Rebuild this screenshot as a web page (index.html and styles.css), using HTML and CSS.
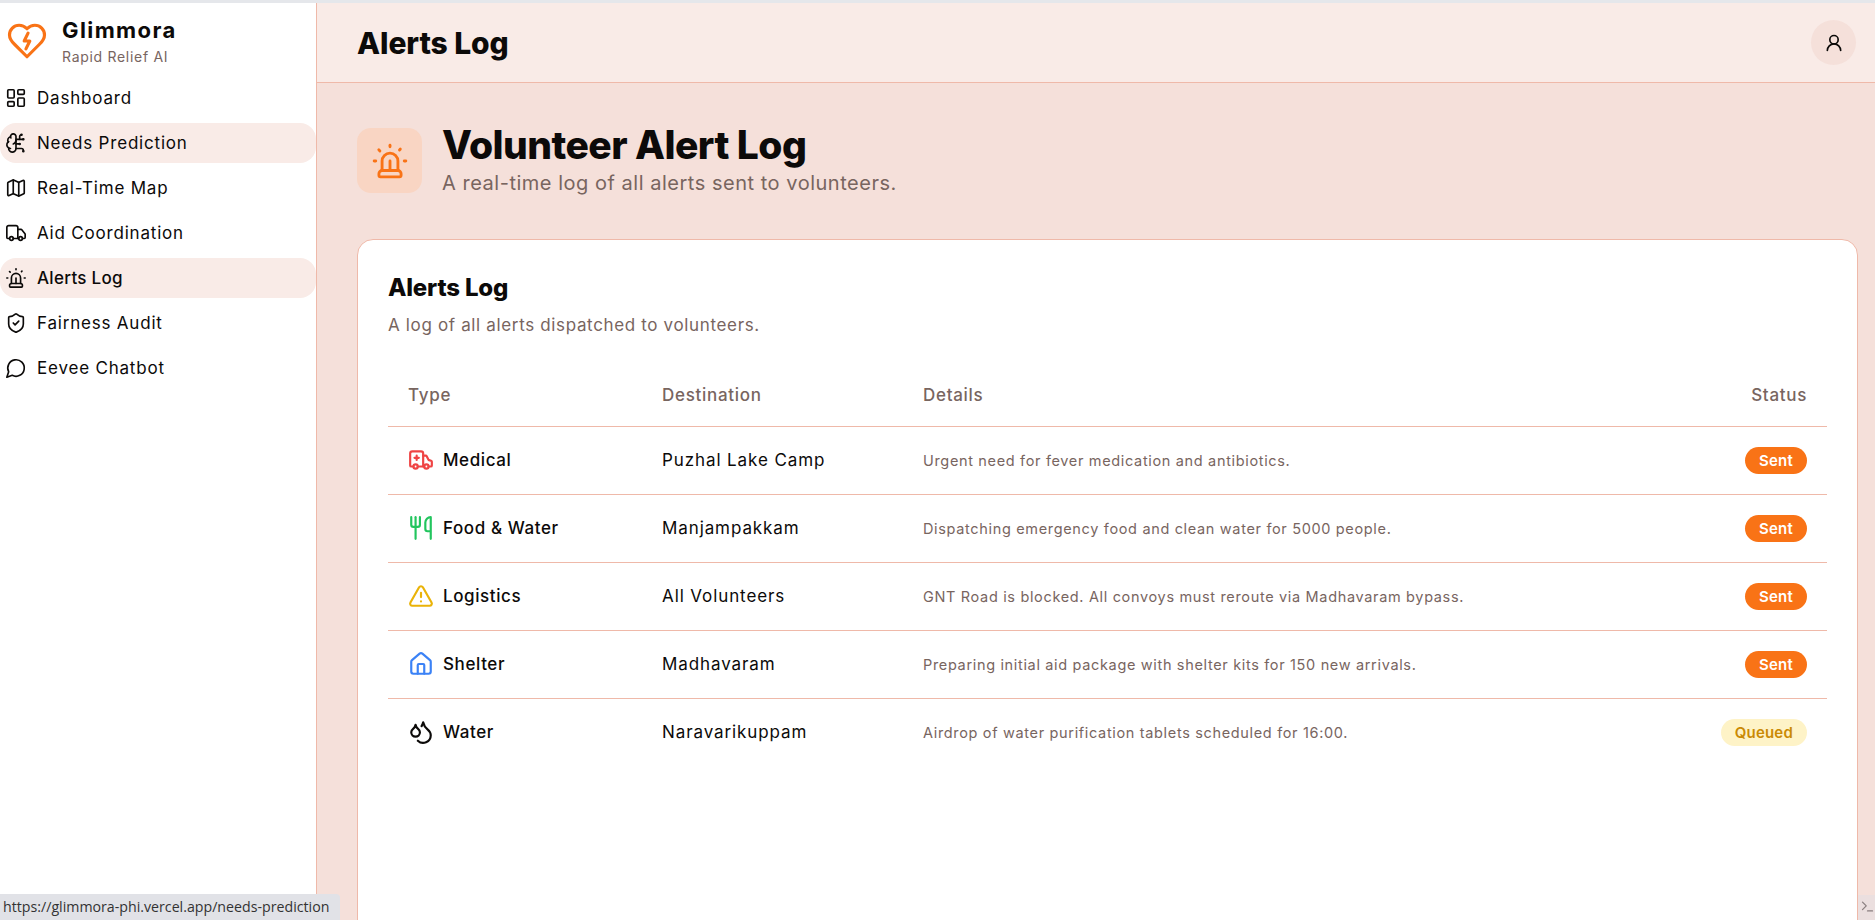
FILE: index.html
```html
<!DOCTYPE html>
<html lang="en">
<head>
	<meta charset="UTF-8">
	<title>Alerts Log</title>
	<link rel="stylesheet" href="styles.css">
</head>
<body>
	<svg class="defs" width="0" height="0">
		<symbol id="i-dashboard" viewBox="0 0 24 24"><rect x="3" y="3" width="7" height="9" rx="1"/><rect x="14" y="3" width="7" height="5" rx="1"/><rect x="14" y="12" width="7" height="9" rx="1"/><rect x="3" y="16" width="7" height="5" rx="1"/></symbol>
		<symbol id="i-brain" viewBox="0 0 24 24"><path d="M12 5a3 3 0 1 0-5.997.125 4 4 0 0 0-2.526 5.77 4 4 0 0 0 .556 6.588A4 4 0 1 0 12 18Z"/><path d="M9 13a4.5 4.5 0 0 0 3-4"/><path d="M6.003 5.125A3 3 0 0 0 6.401 6.5"/><path d="M3.477 10.896a4 4 0 0 1 .585-.396"/><path d="M6 18a4 4 0 0 1-1.967-.516"/><path d="M12 13h4"/><path d="M12 18h6a2 2 0 0 1 2 2v1"/><path d="M12 8h8"/><path d="M16 8V5a2 2 0 0 1 2-2"/><circle cx="16" cy="13" r=".5"/><circle cx="18" cy="3" r=".5"/><circle cx="20" cy="21" r=".5"/><circle cx="20" cy="8" r=".5"/></symbol>
		<symbol id="i-map" viewBox="0 0 24 24"><path d="M14.106 5.553a2 2 0 0 0 1.788 0l3.659-1.83A1 1 0 0 1 21 4.619v12.764a1 1 0 0 1-.553.894l-4.553 2.277a2 2 0 0 1-1.788 0l-4.212-2.106a2 2 0 0 0-1.788 0l-3.659 1.83A1 1 0 0 1 3 19.381V6.618a1 1 0 0 1 .553-.894l4.553-2.277a2 2 0 0 1 1.788 0z"/><path d="M15 5.764v15"/><path d="M9 3.236v15"/></symbol>
		<symbol id="i-truck" viewBox="0 0 24 24"><path d="M14 18V6a2 2 0 0 0-2-2H4a2 2 0 0 0-2 2v11a1 1 0 0 0 1 1h2"/><path d="M15 18H9"/><path d="M19 18h2a1 1 0 0 0 1-1v-3.65a1 1 0 0 0-.22-.624l-3.48-4.35A1 1 0 0 0 17.52 8H14"/><circle cx="17" cy="18" r="2"/><circle cx="7" cy="18" r="2"/></symbol>
		<symbol id="i-siren" viewBox="0 0 24 24"><path d="M7 18v-6a5 5 0 1 1 10 0v6"/><path d="M5 21a1 1 0 0 0 1 1h12a1 1 0 0 0 1-1v-1a2 2 0 0 0-2-2H7a2 2 0 0 0-2 2z"/><path d="M21 12h1"/><path d="M18.5 4.5 18 5"/><path d="M2 12h1"/><path d="M12 2v1"/><path d="m4.929 4.929.707.707"/><path d="M12 12v6"/></symbol>
		<symbol id="i-shield" viewBox="0 0 24 24"><path d="M20 13c0 5-3.5 7.5-7.66 8.95a1 1 0 0 1-.67-.01C7.5 20.5 4 18 4 13V6a1 1 0 0 1 1-1c2 0 4.5-1.2 6.24-2.72a1.17 1.17 0 0 1 1.52 0C14.51 3.81 17 5 19 5a1 1 0 0 1 1 1z"/><path d="m9 12 2 2 4-4"/></symbol>
		<symbol id="i-chat" viewBox="0 0 24 24"><path d="M7.9 20A9 9 0 1 0 4 16.1L2 22Z"/></symbol>
		<symbol id="i-ambulance" viewBox="0 0 24 24"><path d="M10 10H6"/><path d="M14 18V6a2 2 0 0 0-2-2H4a2 2 0 0 0-2 2v11a1 1 0 0 0 1 1h2"/><path d="M19 18h2a1 1 0 0 0 1-1v-3.28a1 1 0 0 0-.684-.948l-1.923-.641a1 1 0 0 1-.578-.502l-1.539-3.076A1 1 0 0 0 16.382 8H14"/><path d="M8 8v4"/><path d="M9 18h6"/><circle cx="17" cy="18" r="2"/><circle cx="7" cy="18" r="2"/></symbol>
		<symbol id="i-utensils" viewBox="0 0 24 24"><path d="M3 2v7c0 1.1.9 2 2 2h4a2 2 0 0 0 2-2V2"/><path d="M7 2v20"/><path d="M21 15V2a5 5 0 0 0-5 5v6c0 1.1.9 2 2 2h3Zm0 0v7"/></symbol>
		<symbol id="i-alert" viewBox="0 0 24 24"><path d="m21.73 18-8-14a2 2 0 0 0-3.48 0l-8 14A2 2 0 0 0 4 21h16a2 2 0 0 0 1.73-3"/><path d="M12 9v4"/><path d="M12 17h.01"/></symbol>
		<symbol id="i-home" viewBox="0 0 24 24"><path d="M15 21v-8a1 1 0 0 0-1-1h-4a1 1 0 0 0-1 1v8"/><path d="M3 10a2 2 0 0 1 .709-1.528l7-5.999a2 2 0 0 1 2.582 0l7 5.999A2 2 0 0 1 21 10v9a2 2 0 0 1-2 2H5a2 2 0 0 1-2-2z"/></symbol>
		<symbol id="i-drops" viewBox="0 0 24 24"><path d="M7 16.3c2.2 0 4-1.83 4-4.05 0-1.16-.57-2.26-1.71-3.19S7.29 6.75 7 5.3c-.29 1.45-1.14 2.84-2.29 3.76S3 11.1 3 12.25c0 2.22 1.8 4.05 4 4.05z"/><path d="M12.56 6.6A10.97 10.97 0 0 0 14 3.02c.5 2.5 2 4.9 4 6.5s3 3.5 3 5.5a6.98 6.98 0 0 1-11.91 4.97"/></symbol>
	</svg>

	<div class="app">
		<aside class="sidebar">
			<div class="brand">
				<svg class="brand-icon" viewBox="0 0 24 24"><path d="M19 14c1.49-1.46 3-3.21 3-5.5A5.5 5.5 0 0 0 16.5 3c-1.76 0-3 .5-4.5 2-1.5-1.5-2.74-2-4.5-2A5.5 5.5 0 0 0 2 8.5c0 2.3 1.5 4.05 3 5.5l7 7Z"/><path d="M12.6 7.5 10.4 12h3.2l-2.2 4.5"/></svg>
				<div>
					<div class="brand-name">Glimmora</div>
					<div class="brand-sub">Rapid Relief AI</div>
				</div>
			</div>
			<nav class="nav">
				<a class="nav-item"><svg class="icon"><use href="#i-dashboard"/></svg>Dashboard</a>
				<a class="nav-item hover"><svg class="icon"><use href="#i-brain"/></svg>Needs Prediction</a>
				<a class="nav-item"><svg class="icon"><use href="#i-map"/></svg>Real-Time Map</a>
				<a class="nav-item"><svg class="icon"><use href="#i-truck"/></svg>Aid Coordination</a>
				<a class="nav-item active"><svg class="icon"><use href="#i-siren"/></svg>Alerts Log</a>
				<a class="nav-item"><svg class="icon"><use href="#i-shield"/></svg>Fairness Audit</a>
				<a class="nav-item"><svg class="icon"><use href="#i-chat"/></svg>Eevee Chatbot</a>
			</nav>
		</aside>

		<div class="main">
			<header class="topbar">
				<h2 class="topbar-title">Alerts Log</h2>
				<div class="avatar"><svg class="avatar-icon" viewBox="0 0 24 24"><circle cx="12" cy="8" r="5"/><path d="M20 21a8 8 0 0 0-16 0"/></svg></div>
			</header>

			<main class="content">
				<div class="hero">
					<div class="hero-icon"><svg><use href="#i-siren"/></svg></div>
					<div>
						<h1 class="hero-title">Volunteer Alert Log</h1>
						<p class="hero-sub">A real-time log of all alerts sent to volunteers.</p>
					</div>
				</div>

				<section class="card">
					<h3 class="card-title">Alerts Log</h3>
					<p class="card-sub">A log of all alerts dispatched to volunteers.</p>
					<table class="log">
						<thead>
							<tr><th class="col-type">Type</th><th class="col-dest">Destination</th><th>Details</th><th class="col-status">Status</th></tr>
						</thead>
						<tbody>
							<tr>
								<td><span class="type"><svg class="type-icon red"><use href="#i-ambulance"/></svg>Medical</span></td>
								<td class="dest">Puzhal Lake Camp</td>
								<td class="details">Urgent need for fever medication and antibiotics.</td>
								<td class="status"><span class="badge sent">Sent</span></td>
							</tr>
							<tr>
								<td><span class="type"><svg class="type-icon green"><use href="#i-utensils"/></svg>Food &amp; Water</span></td>
								<td class="dest">Manjampakkam</td>
								<td class="details">Dispatching emergency food and clean water for 5000 people.</td>
								<td class="status"><span class="badge sent">Sent</span></td>
							</tr>
							<tr>
								<td><span class="type"><svg class="type-icon yellow"><use href="#i-alert"/></svg>Logistics</span></td>
								<td class="dest">All Volunteers</td>
								<td class="details">GNT Road is blocked. All convoys must reroute via Madhavaram bypass.</td>
								<td class="status"><span class="badge sent">Sent</span></td>
							</tr>
							<tr>
								<td><span class="type"><svg class="type-icon blue"><use href="#i-home"/></svg>Shelter</span></td>
								<td class="dest">Madhavaram</td>
								<td class="details">Preparing initial aid package with shelter kits for 150 new arrivals.</td>
								<td class="status"><span class="badge sent">Sent</span></td>
							</tr>
							<tr>
								<td><span class="type"><svg class="type-icon"><use href="#i-drops"/></svg>Water</span></td>
								<td class="dest">Naravarikuppam</td>
								<td class="details">Airdrop of water purification tablets scheduled for 16:00.</td>
								<td class="status"><span class="badge queued">Queued</span></td>
							</tr>
						</tbody>
					</table>
				</section>
			</main>
		</div>
	</div>

	<div class="link-status">https://glimmora-phi.vercel.app/needs-prediction</div>
	<div class="dev-tab"><svg viewBox="0 0 24 24"><path d="m4 17 6-6-6-6"/><path d="M12 19h8"/></svg></div>
</body>
</html>
```

FILE: styles.css
```css
*{
	box-sizing: border-box;
	margin: 0;
	padding: 0;
}
html, body{
	height: 100%;
	overflow: hidden;
}
body{
	font-family: 'Inter', 'Liberation Sans', sans-serif;
	color: #0c0a09;
	background: #fff;
	border-top: 3px solid #e5e7eb;
}
.defs{
	position: absolute;
}
svg{
	fill: none;
	stroke: currentColor;
	stroke-width: 2;
	stroke-linecap: round;
	stroke-linejoin: round;
}
.app{
	display: flex;
	height: 917px;
}

/* sidebar */
.sidebar{
	width: 317px;
	flex-shrink: 0;
	border-right: 1px solid #efb9a9;
	background: #fff;
}
.brand{
	display: flex;
	align-items: center;
	gap: 14px;
	height: 72px;
	padding: 4px 0 0 6px;
}
.brand-icon{
	width: 42px;
	height: 42px;
	color: #f97316;
	stroke-width: 1.8;
}
.brand-name{
	font-size: 22px;
	font-weight: 700;
	letter-spacing: 1.4px;
	line-height: 30px;
}
.brand-sub{
	margin-top: 2px;
	font-size: 14px;
	letter-spacing: 0.7px;
	line-height: 20px;
	color: #78655f;
}
.nav{
	display: flex;
	flex-direction: column;
	gap: 5px;
	padding-top: 3px;
}
.nav-item{
	display: flex;
	align-items: center;
	gap: 10px;
	height: 40px;
	padding-left: 5px;
	border-radius: 16px;
	font-size: 17px;
	letter-spacing: 0.8px;
}
.nav-item.hover, .nav-item.active{
	background: #f9ebe7;
}
.nav-item.active{
	font-weight: 500;
	letter-spacing: 0.3px;
}
.icon{
	width: 22px;
	height: 22px;
	flex-shrink: 0;
	stroke-width: 1.8;
}

/* top bar */
.main{
	flex: 1;
	display: flex;
	flex-direction: column;
	min-width: 0;
	background: #f5e0da;
}
.topbar{
	display: flex;
	flex-shrink: 0;
	align-items: center;
	justify-content: space-between;
	height: 80px;
	padding: 0 19px 0 40px;
	background: #f9ebe7;
	border-bottom: 1px solid #efb9a9;
}
.topbar-title{
	font-size: 30px;
	font-weight: 800;
	letter-spacing: -0.1px;
}
.avatar{
	display: flex;
	align-items: center;
	justify-content: center;
	width: 45px;
	height: 45px;
	border-radius: 50%;
	background: #f5e0da;
}
.avatar-icon{
	width: 20px;
	height: 20px;
}

/* page head */
.content{
	flex: 1;
	padding: 38px 17px 0 40px;
}
.hero{
	display: flex;
	align-items: center;
	gap: 20px;
}
.hero-icon{
	display: flex;
	align-items: center;
	justify-content: center;
	width: 65px;
	height: 65px;
	margin-top: 4px;
	border-radius: 14px;
	background: #f9d5c3;
	color: #f97316;
}
.hero-icon svg{
	width: 38px;
	height: 38px;
	stroke-width: 1.8;
}
.hero-title{
	font-size: 39px;
	font-weight: 800;
	letter-spacing: -0.55px;
	line-height: 48px;
}
.hero-sub{
	margin-top: 1px;
	font-size: 20px;
	letter-spacing: 0.52px;
	line-height: 26px;
	color: #78655f;
}

/* card */
.card{
	margin-top: 43px;
	min-height: 760px;
	padding: 31px 30px 30px;
	background: #fff;
	border: 1px solid #efb9a9;
	border-radius: 16px;
}
.card-title{
	font-size: 24px;
	font-weight: 800;
	letter-spacing: -0.2px;
	line-height: 34px;
}
.card-sub{
	margin-top: 8px;
	font-size: 17px;
	letter-spacing: 0.65px;
	line-height: 24px;
	color: #78655f;
}
.log{
	width: 100%;
	margin-top: 28px;
	table-layout: fixed;
	border-collapse: collapse;
}
.col-type{
	width: 254px;
}
.col-dest{
	width: 261px;
}
.col-status{
	width: 180px;
}
.log th{
	height: 61px;
	padding: 0 20px;
	font-size: 17px;
	font-weight: 500;
	letter-spacing: 0.7px;
	text-align: left;
	color: #78655f;
}
.log th.col-status{
	text-align: right;
}
.log thead tr, .log tbody tr{
	border-bottom: 1px solid #efb9a9;
}
.log tbody tr:last-child{
	border-bottom: 0;
}
.log td{
	height: 68px;
	padding: 0 20px;
	font-size: 17px;
}
.type{
	display: flex;
	align-items: center;
	gap: 9px;
	font-weight: 500;
	letter-spacing: 0.6px;
}
.type-icon{
	width: 26px;
	height: 26px;
}
.red{ color: #ef4444; }
.green{ color: #22c55e; }
.yellow{ color: #eab308; }
.blue{ color: #3b82f6; }
.log .dest{
	letter-spacing: 0.9px;
}
.log .details{
	font-size: 14.5px;
	letter-spacing: 0.66px;
	color: #78655f;
}
.status{
	text-align: right;
}
.badge{
	display: inline-block;
	height: 27px;
	padding: 0 14px;
	border-radius: 14px;
	font-size: 15px;
	font-weight: 600;
	letter-spacing: 0.2px;
	line-height: 27px;
}
.sent{
	background: #f97316;
	color: #fff;
}
.queued{
	background: #fef3c7;
	color: #ca8a04;
}

/* browser bits lying over the page */
.link-status{
	position: fixed;
	left: 0;
	bottom: 0;
	width: 340px;
	height: 26px;
	padding-left: 3px;
	background: #e1e2e7;
	border-top-right-radius: 4px;
	font-family: 'Open Sans', 'Liberation Sans', sans-serif;
	font-size: 14.2px;
	line-height: 26px;
	color: #333;
}
.dev-tab{
	position: fixed;
	right: 0;
	bottom: 0;
	width: 17px;
	height: 25px;
	padding: 3px 0 0 2px;
	background: #ebdfdf;
	color: #8a7f80;
}
.dev-tab svg{
	width: 15px;
	height: 15px;
}
```
